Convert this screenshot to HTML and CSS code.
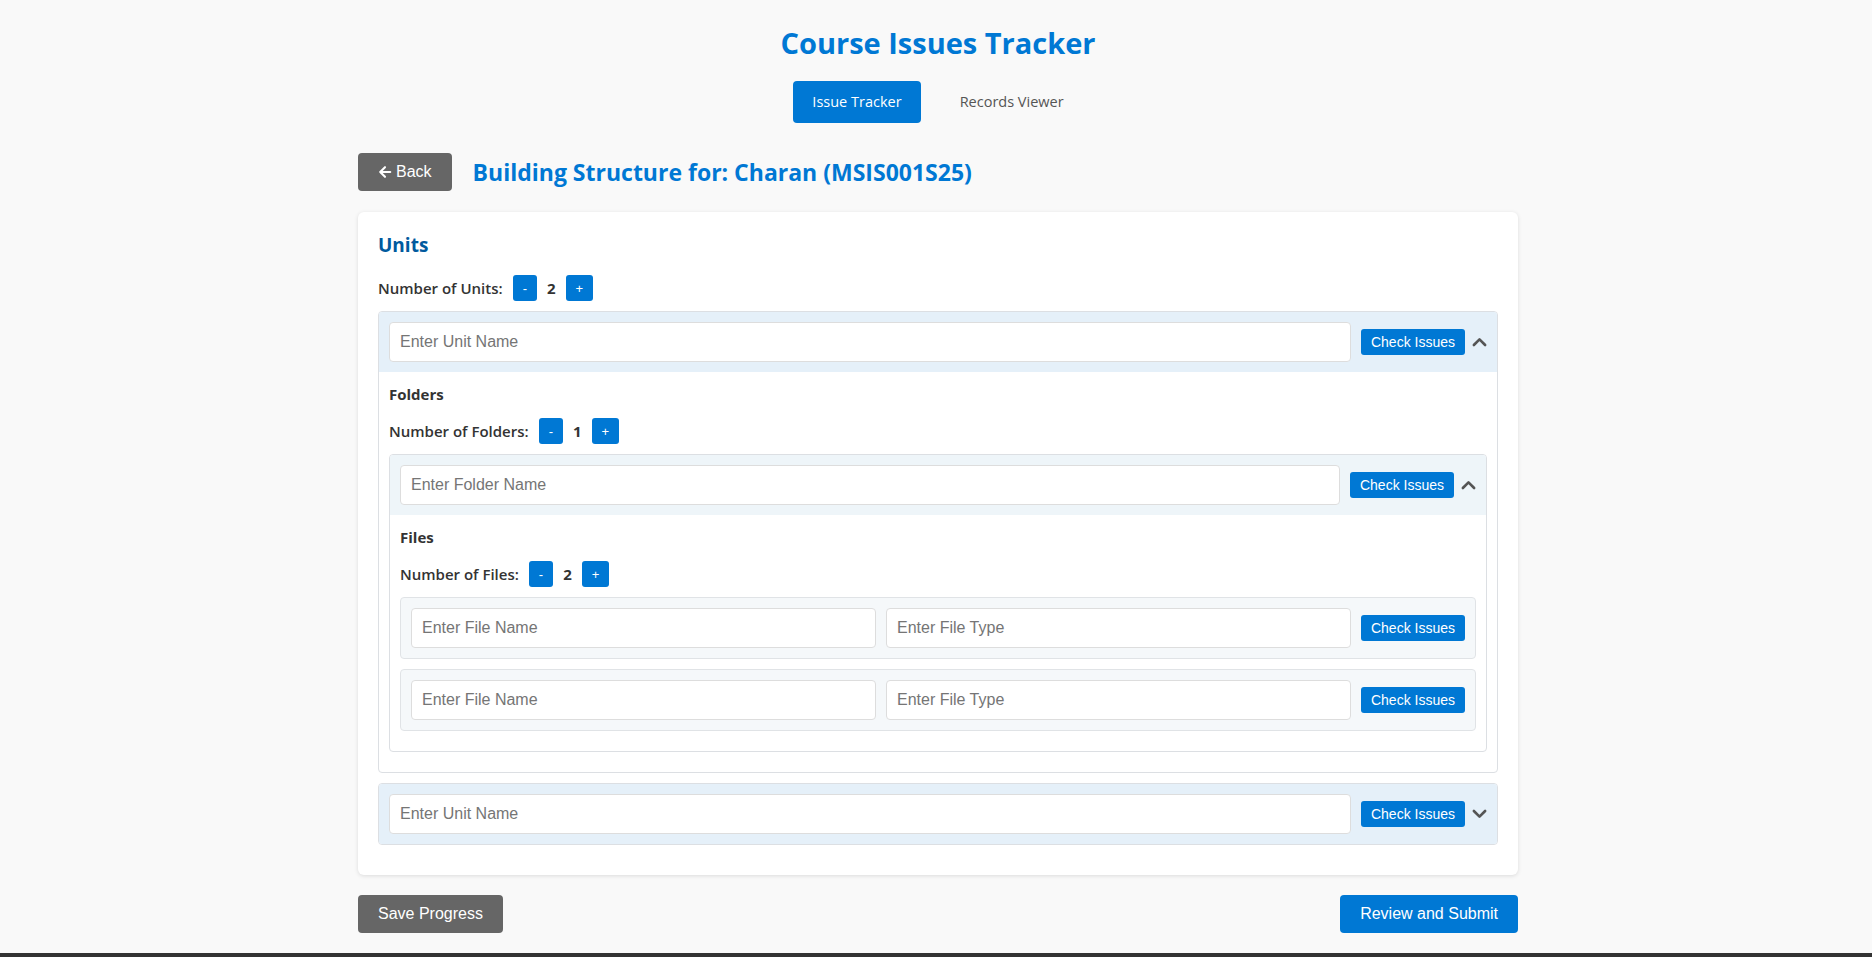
FILE: index.html
```html
<!DOCTYPE html>
<html lang="en">
<head>
<meta charset="utf-8">
<title>Course Issues Tracker</title>
<link rel="stylesheet" href="styles.css">
</head>
<body>
<div class="page">
  <header class="app-header">
    <h1 class="app-title">Course Issues Tracker</h1>
    <nav class="tabs">
      <button class="tab tab-active">Issue Tracker</button>
      <button class="tab">Records Viewer</button>
    </nav>
  </header>

  <main class="container">
    <div class="topbar">
      <button class="back-btn">
        <svg class="back-icon" viewBox="0 0 16 16" width="14" height="14" aria-hidden="true">
          <path d="M8 2.5 L2.5 8 L8 13.5 M2.5 8 H14" fill="none" stroke="#fff" stroke-width="2.4" stroke-linecap="round" stroke-linejoin="round"/>
        </svg>
        Back
      </button>
      <h2 class="structure-title">Building Structure for: Charan (MSIS001S25)</h2>
    </div>

    <section class="card">
      <h3 class="section-title">Units</h3>
      <div class="counter">
        <span class="counter-label">Number of Units:</span>
        <button class="count-btn">-</button>
        <span class="count-value">2</span>
        <button class="count-btn">+</button>
      </div>

      <div class="unit">
        <div class="unit-header">
          <input class="text-input" type="text" placeholder="Enter Unit Name">
          <button class="check-btn">Check Issues</button>
          <span class="toggle">
            <svg viewBox="0 0 16 10" width="15" height="10" aria-hidden="true"><path d="M2 8.2 L8 2.2 L14 8.2" fill="none" stroke="#555" stroke-width="2.8" stroke-linecap="round" stroke-linejoin="round"/></svg>
          </span>
        </div>
        <div class="unit-body">
          <h4 class="sub-title">Folders</h4>
          <div class="counter">
            <span class="counter-label">Number of Folders:</span>
            <button class="count-btn">-</button>
            <span class="count-value">1</span>
            <button class="count-btn">+</button>
          </div>

          <div class="folder">
            <div class="folder-header">
              <input class="text-input" type="text" placeholder="Enter Folder Name">
              <button class="check-btn">Check Issues</button>
              <span class="toggle">
                <svg viewBox="0 0 16 10" width="15" height="10" aria-hidden="true"><path d="M2 8.2 L8 2.2 L14 8.2" fill="none" stroke="#555" stroke-width="2.8" stroke-linecap="round" stroke-linejoin="round"/></svg>
              </span>
            </div>
            <div class="folder-body">
              <h4 class="sub-title">Files</h4>
              <div class="counter">
                <span class="counter-label">Number of Files:</span>
                <button class="count-btn">-</button>
                <span class="count-value">2</span>
                <button class="count-btn">+</button>
              </div>
              <div class="file-item">
                <input class="text-input" type="text" placeholder="Enter File Name">
                <input class="text-input" type="text" placeholder="Enter File Type">
                <button class="check-btn">Check Issues</button>
              </div>
              <div class="file-item">
                <input class="text-input" type="text" placeholder="Enter File Name">
                <input class="text-input" type="text" placeholder="Enter File Type">
                <button class="check-btn">Check Issues</button>
              </div>
            </div>
          </div>
        </div>
      </div>

      <div class="unit">
        <div class="unit-header">
          <input class="text-input" type="text" placeholder="Enter Unit Name">
          <button class="check-btn">Check Issues</button>
          <span class="toggle">
            <svg viewBox="0 0 16 10" width="15" height="10" aria-hidden="true"><path d="M2 1.8 L8 7.8 L14 1.8" fill="none" stroke="#555" stroke-width="2.8" stroke-linecap="round" stroke-linejoin="round"/></svg>
          </span>
        </div>
      </div>
    </section>

    <div class="actions">
      <button class="action-btn save-btn">Save Progress</button>
      <button class="action-btn submit-btn">Review and Submit</button>
    </div>
  </main>
</div>
<footer class="page-footer"></footer>
</body>
</html>
```

FILE: styles.css
```css
* {
  box-sizing: border-box;
}

body {
  margin: 0;
  background: #f9f9f9;
  font-family: "Open Sans", "Noto Sans", sans-serif;
  color: #333;
}

.page {
  padding: 0 0 20px 4px;
}

.app-header {
  text-align: center;
  padding-top: 28px;
}

.app-title {
  margin: 0;
  font-size: 29px;
  line-height: 30px;
  font-weight: 700;
  color: #0078d4;
}

.tabs {
  display: flex;
  justify-content: center;
  gap: 20px;
  margin-top: 23px;
}

.tab {
  font-family: "Open Sans", "Noto Sans", sans-serif;
  font-size: 14.5px;
  line-height: 22px;
  padding: 10px 19px;
  border: none;
  border-radius: 4px;
  background: transparent;
  color: #555;
  cursor: pointer;
}

.tab-active {
  background: #0078d4;
  color: #fff;
}

.container {
  width: 1160px;
  margin: 30px auto 0;
}

.topbar {
  display: flex;
  align-items: center;
  gap: 21px;
  margin-bottom: 21px;
}

.back-btn {
  display: flex;
  align-items: center;
  gap: 4px;
  height: 38px;
  padding: 0 20px;
  border: none;
  border-radius: 4px;
  background: #666;
  color: #fff;
  font-family: "Liberation Sans", Arial, sans-serif;
  font-size: 16px;
}

.structure-title {
  margin: 0;
  font-size: 23px;
  line-height: 30px;
  font-weight: 700;
  color: #0078d4;
}

.card {
  background: #fff;
  border-radius: 6px;
  box-shadow: 0 1px 4px rgba(0, 0, 0, 0.12);
  padding: 20px;
}

.section-title {
  margin: 0 0 17px;
  font-size: 19px;
  line-height: 26px;
  font-weight: 700;
  color: #005a9e;
}

.counter {
  display: flex;
  align-items: center;
  gap: 10px;
  margin-bottom: 10px;
}

.counter-label {
  font-size: 15px;
  font-weight: 600;
  color: #333;
}

.count-value {
  font-size: 15px;
  font-weight: 700;
  color: #333;
}

.count-btn {
  height: 26px;
  padding: 0 10px;
  border: none;
  border-radius: 3px;
  background: #0078d4;
  color: #fff;
  font-family: "Liberation Sans", Arial, sans-serif;
  font-size: 13px;
}

.unit {
  border: 1px solid #dcdfe3;
  border-radius: 4px;
  margin-bottom: 10px;
  overflow: hidden;
}

.unit-header {
  display: flex;
  align-items: center;
  gap: 10px;
  padding: 10px;
  background: #e5f0f9;
}

.folder-header {
  display: flex;
  align-items: center;
  gap: 10px;
  padding: 10px;
  background: #eef5f9;
}

.toggle {
  display: flex;
  align-items: center;
  margin-left: -3px;
}

.text-input {
  flex: 1;
  min-width: 0;
  height: 40px;
  padding: 0 10px;
  border: 1px solid #ddd;
  border-radius: 4px;
  background: #fff;
  font-family: "Liberation Sans", Arial, sans-serif;
  font-size: 16px;
  color: #333;
}

.text-input::placeholder {
  color: #757575;
}

.check-btn {
  height: 26px;
  padding: 0 10px;
  border: none;
  border-radius: 3px;
  background: #0078d4;
  color: #fff;
  font-family: "Liberation Sans", Arial, sans-serif;
  font-size: 14px;
  white-space: nowrap;
}

.unit-body,
.folder-body {
  padding: 10px;
}

.sub-title {
  margin: 1px 0 13px;
  font-size: 15px;
  line-height: 22px;
  font-weight: 700;
  color: #333;
}

.folder {
  border: 1px solid #dcdfe3;
  border-radius: 4px;
  margin-bottom: 10px;
  overflow: hidden;
}

.file-item {
  display: flex;
  align-items: center;
  gap: 10px;
  padding: 10px;
  margin-bottom: 10px;
  background: #f5f8fa;
  border: 1px solid #e0e3e6;
  border-radius: 4px;
}

.actions {
  display: flex;
  justify-content: space-between;
  margin-top: 20px;
}

.action-btn {
  height: 38px;
  padding: 0 20px;
  border: none;
  border-radius: 4px;
  color: #fff;
  font-family: "Liberation Sans", Arial, sans-serif;
  font-size: 16px;
}

.save-btn {
  background: #666;
}

.submit-btn {
  background: #0078d4;
}

.page-footer {
  height: 40px;
  background: #333;
}
```
